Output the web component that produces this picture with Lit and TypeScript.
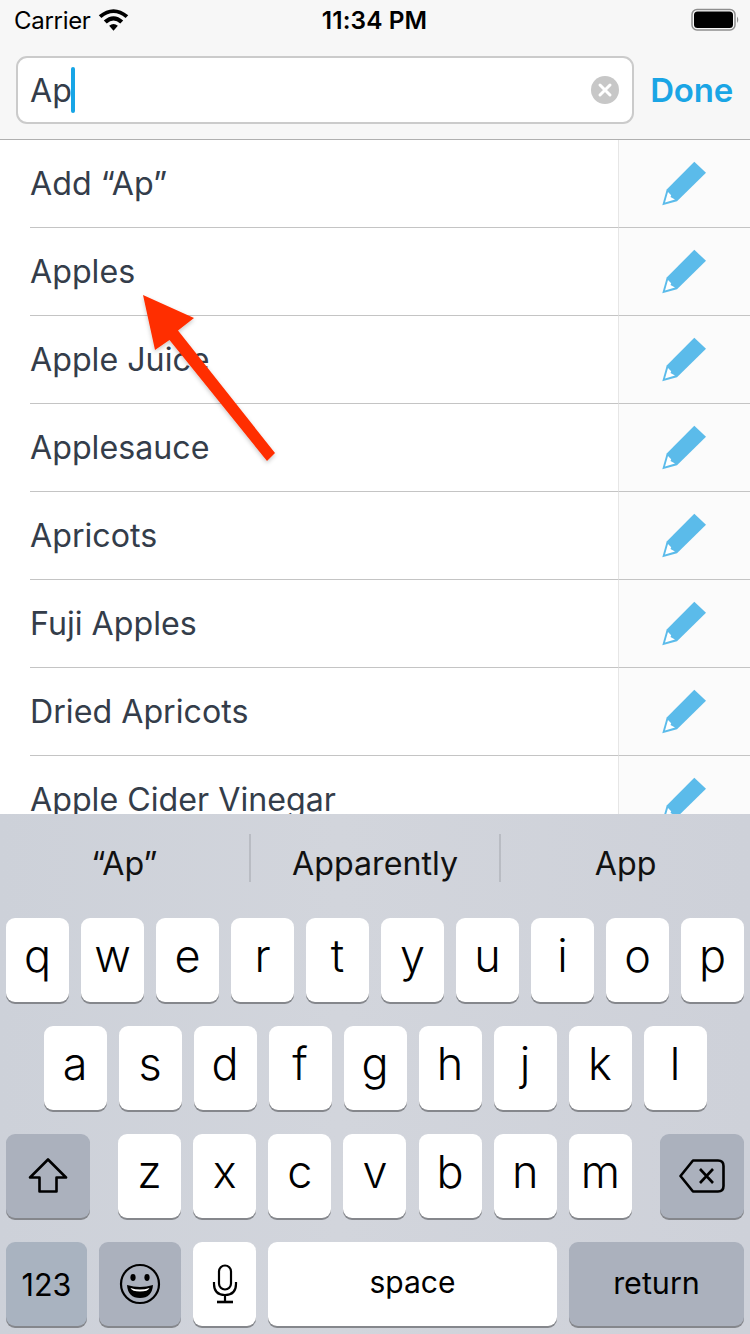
import { LitElement, html, css } from "lit";
import { customElement } from "lit/decorators.js";

const ITEMS = ["Add “Ap”", "Apples", "Apple Juice", "Applesauce", "Apricots", "Fuji Apples", "Dried Apricots", "Apple Cider Vinegar"];
const ROW1 = "qwertyuiop".split("");
const ROW2 = "asdfghjkl".split("");
const ROW3 = "zxcvbnm".split("");

const pencil = html`<svg width="46" height="46" viewBox="0 0 46 46">
  <path d="M33.3 1.8 L45 12.8 L16 41.2 L1.3 45.2 L5.7 29.5 Z" fill="#5bbbea"/>
  <path d="M7 32 L10.2 35.2 L9.5 37 L14 39.4 L4 42.4 Z" fill="#fff"/>
</svg>`;

@customElement("app-root")
export class AppRoot extends LitElement {
  static styles = css`
    :host { display: block; width: 750px; height: 1334px; position: relative; overflow: hidden; font-family: Inter, "Noto Sans", sans-serif; background: #fff; }
    .page { display: flex; flex-direction: column; width: 750px; height: 1334px; }
    .top { background: #f7f7f7; height: 140px; box-sizing: border-box; flex: none; border-bottom: 1px solid #b0b0b0; display: flex; flex-direction: column; }
    .status { height: 40px; display: grid; grid-template-columns: 1fr auto 1fr; align-items: center; padding: 0 15px 0 14px; color: #000; }
    .status .l { display: flex; align-items: center; gap: 7px; font-size: 24px; letter-spacing: -.3px; }
    .status .time { font-size: 24.4px; font-weight: 600; letter-spacing: .1px; }
    .status .r { display: flex; justify-content: flex-end; align-items: center; }
    .battery { margin-right: -6px; }
    .searchrow { display: flex; align-items: center; padding: 16px 17px 0 16px; gap: 16px; }
    .field { flex: 1; height: 68px; box-sizing: border-box; border: 2px solid #cbcbcb; border-radius: 11px; background: #fff; display: flex; align-items: center; padding: 0 12px 0 12px; }
    .field .txt { font-size: 32.2px; color: #343d4a; }
    .caret { width: 4px; height: 46px; background: #17a5e6; border-radius: 2px; margin-left: -1px; }
    .clear { margin-left: auto; }
    .done { font-size: 33px; font-weight: 600; color: #1aa5e5; letter-spacing: -.2px; }
    .list { flex: 1; overflow: hidden; min-height: 0; }
    .row { height: 88px; box-sizing: border-box; display: flex; }
    .label { flex: 1; display: flex; align-items: center; padding: 0 0 1px 30px; font-size: 32.2px; color: #343d4a; position: relative; }
    .label::after { content: ""; position: absolute; left: 30px; right: 0; bottom: 0; height: 1px; background: #c4c4c4; }
    .act { width: 132px; box-sizing: border-box; background: #fbfbfb; border-left: 1px solid #e6e6e6; border-bottom: 1px solid #c4c4c4; display: flex; align-items: center; justify-content: center; padding: 0 2px 1px 0; }
    .kb { flex: none; height: 520px; background: linear-gradient(90deg, #cdd1d9 0%, #d2d5dc 45%, #ced1d9 100%); display: flex; flex-direction: column; }
    .sugg { height: 104px; display: flex; padding-top: 20px; box-sizing: border-box; }
    .s { flex: 1; height: 48px; box-sizing: border-box; padding-top: 10px; display: flex; align-items: center; justify-content: center; font-size: 32.2px; color: #111; border-left: 2px solid #b9bcc3; }
    .s:first-child { border-left: none; }
    .krow { display: flex; justify-content: center; gap: 12px; margin-bottom: 24px; height: 84px; }
    .krow.spread { padding: 0 6px; justify-content: flex-start; }
    .krow.third { gap: 12.17px; }
    .krow.last { margin-bottom: 0; }
    .key { flex: none; width: 63px; height: 84px; box-sizing: border-box; background: #fff; border-radius: 9px; box-shadow: 0 2px 0 #85878c; display: flex; align-items: center; justify-content: center; font-size: 45px; color: #000; padding-bottom: 10px; font-weight: 300; }
    .fn { background: #abb1bd; font-size: 30.5px; padding-bottom: 0; font-weight: 400; }
    .num { background: #a9b3c0; }
    .w84 { width: 84px; }
    .w81 { width: 81px; }
    .w82 { width: 82px; }
    .flat { padding: 0; }
    .space { width: 289px; font-size: 30px; padding-bottom: 4px; font-weight: 400; }
    .ret { width: 175px; padding-bottom: 3px; }
    .spacer { width: 3.7px; flex: none; }
    .arrow { position: absolute; left: 140px; top: 290px; pointer-events: none; }
  `;

  render() {
    return html`<div class="page">
      <div class="top">
        <div class="status">
          <div class="l">Carrier
            <svg width="31" height="24" viewBox="0 0 32 24"><path d="M16 23 L11.5 18 Q16 14 20.5 18 Z M9 15.5 L6 12.5 Q16 3.5 26 12.5 L23 15.5 Q16 9.5 9 15.5 Z M3.5 10 L0.8 7.2 Q16 -5.5 31.2 7.2 L28.5 10 Q16 -0.5 3.5 10 Z" fill="#000"/></svg>
          </div>
          <div class="time">11:34 PM</div>
          <div class="r">
            <svg class="battery" width="50" height="24" viewBox="0 0 50 24"><rect x="1" y="1.5" width="43" height="20.5" rx="5" fill="none" stroke="#8e8e8e" stroke-width="1.5"/><rect x="3" y="3.5" width="39" height="16.5" rx="3.5" fill="#000"/><path d="M46 8.5 Q48.5 11.5 46 15 Z" fill="#8e8e8e"/></svg>
          </div>
        </div>
        <div class="searchrow">
          <div class="field">
            <span class="txt">Ap</span><span class="caret"></span>
            <svg class="clear" width="30" height="30" viewBox="0 0 30 30"><circle cx="15" cy="15" r="14" fill="#c7c7c7"/><path d="M10 10 L20 20 M20 10 L10 20" stroke="#fff" stroke-width="3" stroke-linecap="round"/></svg>
          </div>
          <span class="done">Done</span>
        </div>
      </div>
      <div class="list">
        ${ITEMS.map(i => html`<div class="row"><div class="label">${i}</div><div class="act">${pencil}</div></div>`)}
      </div>
      <div class="kb">
        <div class="sugg">
          <div class="s">“Ap”</div><div class="s">Apparently</div><div class="s">App</div>
        </div>
        <div class="krow">${ROW1.map(k => html`<div class="key">${k}</div>`)}</div>
        <div class="krow">${ROW2.map(k => html`<div class="key">${k}</div>`)}</div>
        <div class="krow spread third">
          <div class="key fn w84">
            <svg width="40" height="36" viewBox="0 0 40 36"><path d="M20 1.5 L38 19.5 L28.5 19.5 L28.5 33.5 L11.5 33.5 L11.5 19.5 L2 19.5 Z" fill="none" stroke="#000" stroke-width="2.6" stroke-linejoin="round"/></svg>
          </div>
          <div class="spacer"></div>
          ${ROW3.map(k => html`<div class="key">${k}</div>`)}
          <div class="spacer"></div>
          <div class="key fn w84">
            <svg width="46" height="34" viewBox="0 0 46 34"><path d="M14 1.5 L39 1.5 Q44.5 1.5 44.5 7 L44.5 27 Q44.5 32.5 39 32.5 L14 32.5 L1.5 17 Z" fill="none" stroke="#000" stroke-width="2.6" stroke-linejoin="round"/><path d="M21 10 L34 24 M34 10 L21 24" stroke="#000" stroke-width="2.6"/></svg>
          </div>
        </div>
        <div class="krow spread last">
          <div class="key fn num w81">123</div>
          <div class="key fn w82">
            <svg width="42" height="42" viewBox="0 0 42 42"><circle cx="21" cy="21" r="19" fill="none" stroke="#000" stroke-width="2.2"/><ellipse cx="14" cy="14.5" rx="2.6" ry="3.4"/><ellipse cx="28" cy="14.5" rx="2.6" ry="3.4"/><path d="M8 22 Q21 26 34 22 Q33 35 21 35 Q9 35 8 22 Z" fill="#000"/><path d="M11.5 25 Q21 28 30.5 25 Q29 28.5 21 28.5 Q13 28.5 11.5 25 Z" fill="#fff"/></svg>
          </div>
          <div class="key flat">
            <svg width="26" height="40" viewBox="0 0 26 40"><rect x="7" y="1.5" width="12" height="24" rx="6" fill="none" stroke="#000" stroke-width="2.2"/><path d="M2 18 L2 20 Q2 31 13 31 Q24 31 24 20 L24 18" fill="none" stroke="#000" stroke-width="2.2"/><path d="M13 31 L13 37" stroke="#000" stroke-width="2.2"/><path d="M5 38 L21 38" stroke="#000" stroke-width="2.6"/></svg>
          </div>
          <div class="key space">space</div>
          <div class="key fn ret">return</div>
        </div>
      </div>
    </div>
    <svg class="arrow" width="140" height="180" viewBox="0 0 140 180">
      <defs><filter id="sh" x="-20%" y="-20%" width="140%" height="140%"><feDropShadow dx="0" dy="2" stdDeviation="2" flood-color="#000" flood-opacity=".22"/></filter></defs>
      <path d="M3 5 L54 28 L38 40.5 L135 163 L127 171 L29.5 50 L15 60 Z" fill="#ff2f00" filter="url(#sh)"/>
    </svg>`;
  }
}
